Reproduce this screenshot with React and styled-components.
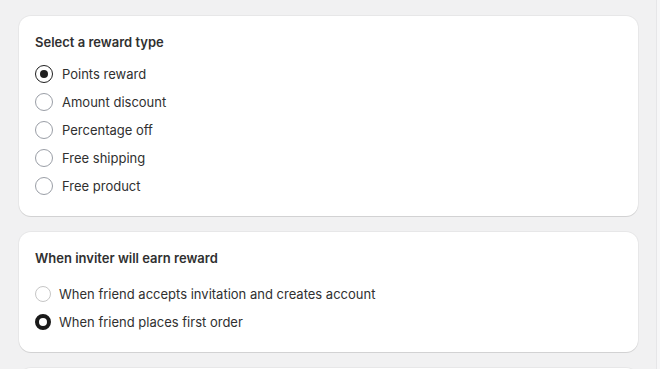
import React from 'react';
import styled, { createGlobalStyle } from 'styled-components';

const Global = createGlobalStyle`
  html, body {
    margin: 0;
    padding: 0;
    background: #f1f1f2;
    font-family: Inter, "Noto Sans", sans-serif;
    color: #303030;
    -webkit-font-smoothing: antialiased;
  }
`;

const Page = styled.div`
  display: flex;
  height: 369px;
  overflow: hidden;
`;

const Column = styled.div`
  display: flex;
  flex-direction: column;
  gap: 16px;
  padding: 16px 0 0 19px;
  width: 620px;
`;

const Side = styled.div`
  margin-left: 18px;
  width: 3px;
  background: #f7f7f8;
  border-left: 1px solid #e6e6e8;
`;

const Card = styled.section`
  background: #fff;
  border-radius: 12px;
  box-shadow: 0 1px 0 rgba(0, 0, 0, 0.09), 0 0 0 1px rgba(0, 0, 0, 0.04);
  padding: 16px;
  display: flex;
  flex-direction: column;
  gap: ${p => p.$gap}px;
  flex-shrink: 0;
`;

const Title = styled.h2`
  margin: 0;
  font-size: 13px;
  line-height: 20px;
  font-weight: 600;
  color: #303030;
`;

const List = styled.div`
  display: flex;
  flex-direction: column;
`;

const Row = styled.label`
  display: flex;
  align-items: center;
  gap: ${p => (p.$small ? 8 : 9)}px;
  height: 28px;
  font-size: 13px;
  color: #303030;
`;

const Circle = styled.span`
  box-sizing: border-box;
  width: 18px;
  height: 18px;
  border-radius: 50%;
  border: 1.6px solid ${p => (p.$on ? '#1f1f1f' : '#9a9ea6')};
  display: flex;
  align-items: center;
  justify-content: center;
  flex-shrink: 0;
  &::after {
    content: '';
    width: 8px;
    height: 8px;
    border-radius: 50%;
    background: ${p => (p.$on ? '#1f1f1f' : 'transparent')};
  }
`;

const SmallCircle = styled.span`
  box-sizing: border-box;
  width: 16px;
  height: 16px;
  border-radius: 50%;
  border: ${p => (p.$on ? '4.5px solid #1a1a1a' : '1px solid #c6c6c6')};
  flex-shrink: 0;
`;

const Stub = styled(Card)`
  height: 40px;
`;

const rewards = ['Points reward', 'Amount discount', 'Percentage off', 'Free shipping', 'Free product'];
const moments = ['When friend accepts invitation and creates account', 'When friend places first order'];

export default function App() {
  return (
    <Page>
      <Global />
      <Column>
        <Card $gap={8}>
          <Title>Select a reward type</Title>
          <List>
            {rewards.map((r, i) => (
              <Row key={r}>
                <Circle $on={i === 0} />
                {r}
              </Row>
            ))}
          </List>
        </Card>
        <Card $gap={12}>
          <Title>When inviter will earn reward</Title>
          <List>
            {moments.map((m, i) => (
              <Row key={m} $small>
                <SmallCircle $on={i === 1} />
                {m}
              </Row>
            ))}
          </List>
        </Card>
        <Stub />
      </Column>
      <Side />
    </Page>
  );
}
